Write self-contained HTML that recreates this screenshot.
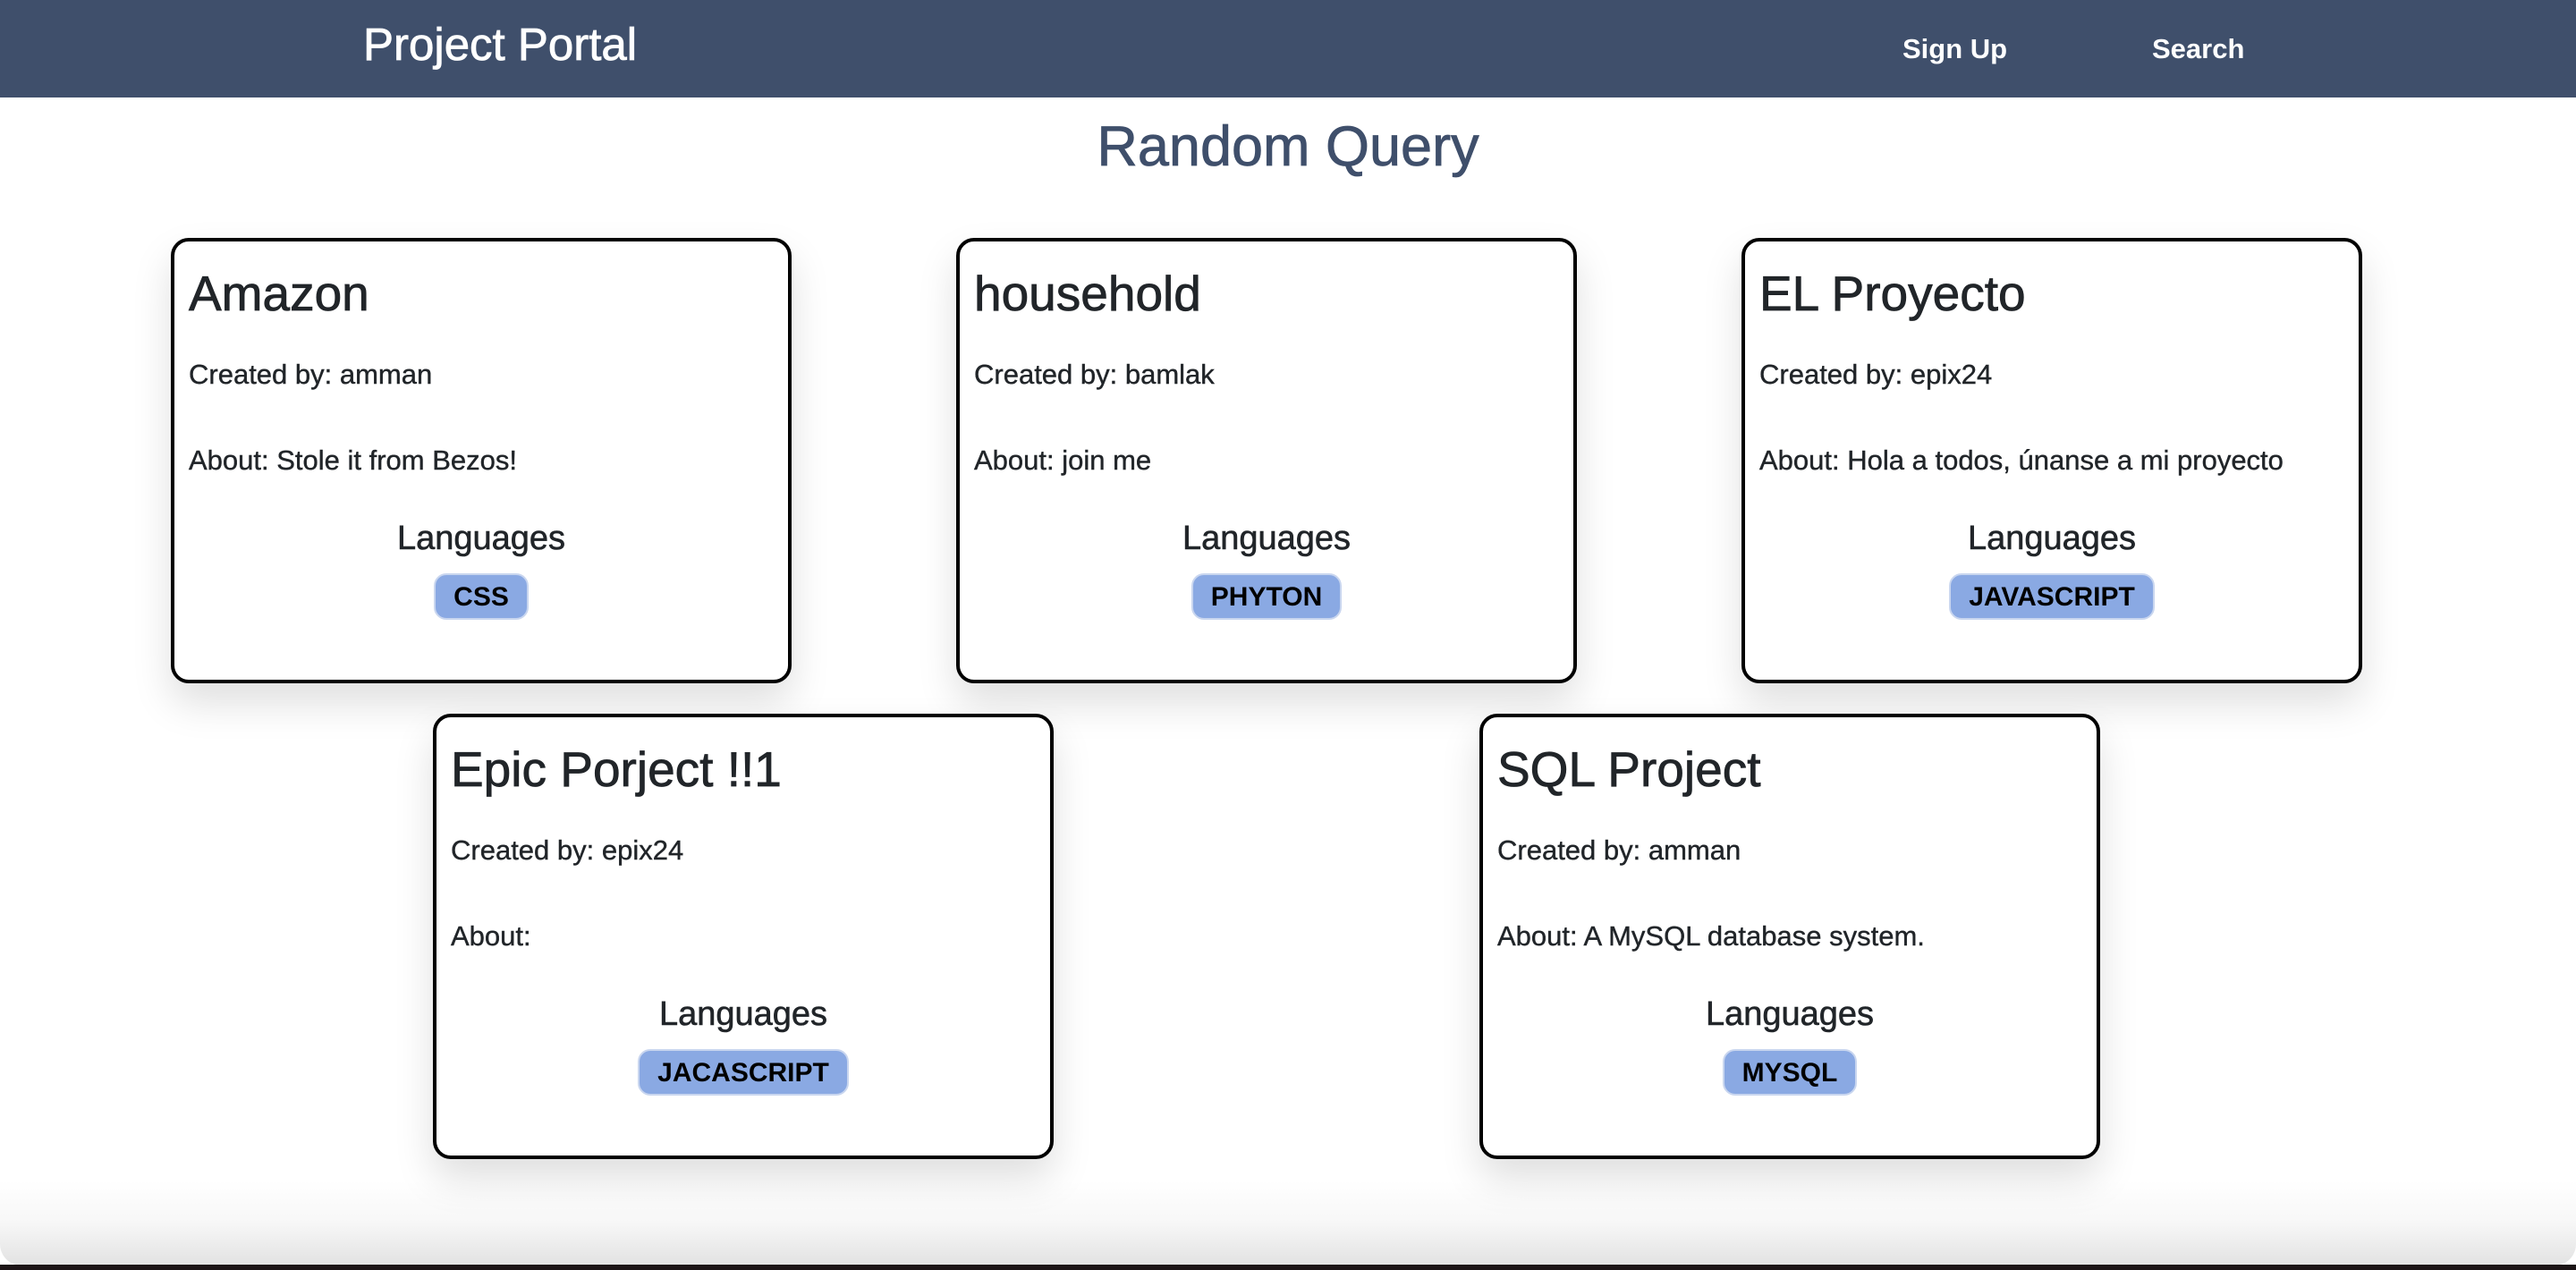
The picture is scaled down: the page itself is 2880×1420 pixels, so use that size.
<!DOCTYPE html>
<html><head><meta charset="utf-8"><style>
*{margin:0;padding:0;box-sizing:border-box}
body{width:2880px;height:1420px;position:relative;overflow:hidden;background:#fff;font-family:"Liberation Sans",Arial,sans-serif;color:#212529}
.nav{position:absolute;left:0;top:0;width:2880px;height:109px;background:#3f4f6b}
.abs{position:absolute;white-space:nowrap;line-height:1}
.brand{left:406px;top:24px;font-size:51px;color:#fff;-webkit-text-stroke:0.8px #fff}
.link{top:39px;font-size:31px;font-weight:bold;color:#fff}
.h1{left:0;width:2880px;text-align:center;top:133px;font-size:63px;color:#3f4f6b;-webkit-text-stroke:0.8px #3f4f6b}
.card{position:absolute;width:694px;height:498px;border:4px solid #000;border-radius:20px;background:#fff;box-shadow:0 22px 44px rgba(0,0,0,0.13)}
.card .t{position:absolute;left:16px;top:31px;font-size:55px;line-height:1;white-space:nowrap;-webkit-text-stroke:0.8px #212529}
.card .c{position:absolute;left:16px;top:133px;font-size:31px;line-height:1;white-space:nowrap;-webkit-text-stroke:0.4px #212529}
.card .a{position:absolute;left:16px;top:229px;font-size:31px;line-height:1;white-space:nowrap;-webkit-text-stroke:0.4px #212529}
.card .l{position:absolute;left:0;width:100%;text-align:center;top:313px;font-size:38px;line-height:1;-webkit-text-stroke:0.6px #212529}
.card .bw{position:absolute;left:0;width:100%;text-align:center;top:371px}
.badge{display:inline-block;height:52px;line-height:50px;padding:0 20px;background:#8aa9e3;border:2px solid #c9d6ef;border-radius:14px;font-weight:bold;font-size:30px;color:#000}
.bot{position:absolute;left:0;top:1320px;width:2880px;height:95px;background:linear-gradient(#fff,#f7f7f7 50%,#e2e2e2);border-radius:0 0 24px 24px}
.strip{position:absolute;left:0;top:1414px;width:2880px;height:6px;background:#1c1416}
</style></head><body>
<div class="bot"></div><div class="strip"></div>
<div class="nav"></div>
<div class="abs brand">Project Portal</div>
<div class="abs link" style="left:2127px">Sign Up</div>
<div class="abs link" style="left:2406px">Search</div>
<div class="abs h1">Random Query</div>

<div class="card" style="left:191px;top:266px"><div class="t">Amazon</div><div class="c">Created by: amman</div><div class="a">About: Stole it from Bezos!</div><div class="l">Languages</div><div class="bw"><span class="badge">CSS</span></div></div>
<div class="card" style="left:1069px;top:266px"><div class="t">household</div><div class="c">Created by: bamlak</div><div class="a">About: join me</div><div class="l">Languages</div><div class="bw"><span class="badge">PHYTON</span></div></div>
<div class="card" style="left:1947px;top:266px"><div class="t">EL Proyecto</div><div class="c">Created by: epix24</div><div class="a">About: Hola a todos, únanse a mi proyecto</div><div class="l">Languages</div><div class="bw"><span class="badge">JAVASCRIPT</span></div></div>
<div class="card" style="left:484px;top:798px"><div class="t">Epic Porject !!1</div><div class="c">Created by: epix24</div><div class="a">About:</div><div class="l">Languages</div><div class="bw"><span class="badge">JACASCRIPT</span></div></div>
<div class="card" style="left:1654px;top:798px"><div class="t">SQL Project</div><div class="c">Created by: amman</div><div class="a">About: A MySQL database system.</div><div class="l">Languages</div><div class="bw"><span class="badge">MYSQL</span></div></div>
</body></html>
